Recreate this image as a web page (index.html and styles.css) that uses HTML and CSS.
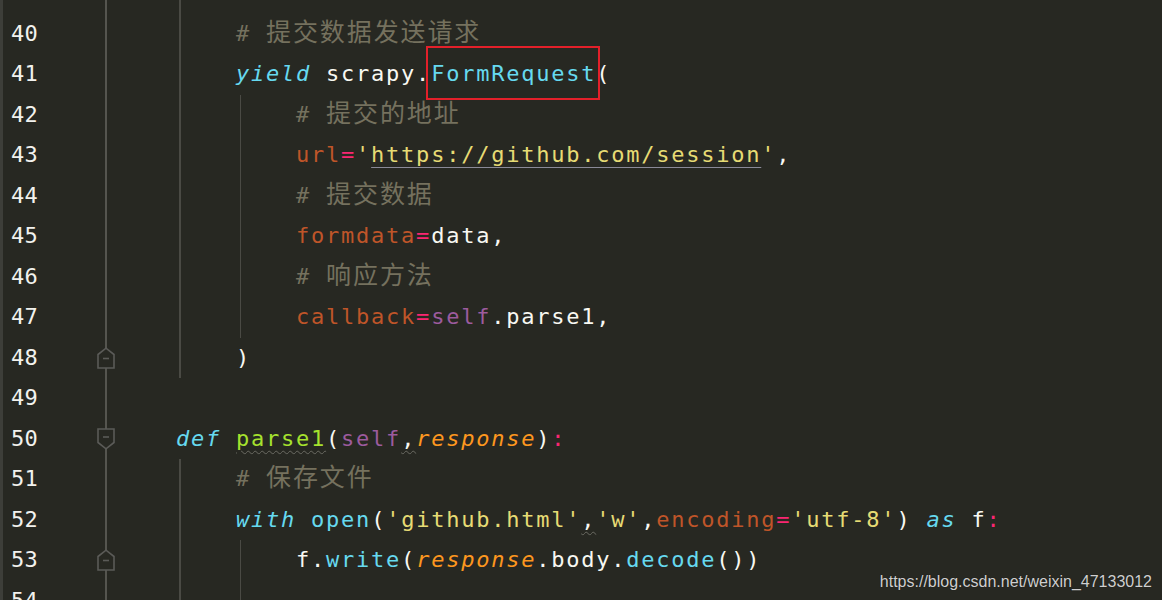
FILE: index.html
```html
<!DOCTYPE html>
<html>
<head>
<meta charset="utf-8">
<link rel="stylesheet" href="styles.css">
</head>
<body>
<div class="editor">
  <div class="row"><span class="ln">39</span><span class="fold"></span><span class="code g1"></span></div>
  <div class="row"><span class="ln">40</span><span class="fold"></span><span class="code g1">        <span class="cm"># <span class="cjk">提交数据发送请求</span></span></span></div>
  <div class="row"><span class="ln">41</span><span class="fold"></span><span class="code g1">        <span class="kw">yield</span> scrapy.<span class="fn boxed">FormRequest</span>(</span></div>
  <div class="row"><span class="ln">42</span><span class="fold"></span><span class="code g2">            <span class="cm"># <span class="cjk">提交的地址</span></span></span></div>
  <div class="row"><span class="ln">43</span><span class="fold"></span><span class="code g2">            <span class="arg">url</span><span class="op">=</span><span class="str">'<span class="link">https://github.com/session</span>'</span>,</span></div>
  <div class="row"><span class="ln">44</span><span class="fold"></span><span class="code g2">            <span class="cm"># <span class="cjk">提交数据</span></span></span></div>
  <div class="row"><span class="ln">45</span><span class="fold"></span><span class="code g2">            <span class="arg">formdata</span><span class="op">=</span>data,</span></div>
  <div class="row"><span class="ln">46</span><span class="fold"></span><span class="code g2">            <span class="cm"># <span class="cjk">响应方法</span></span></span></div>
  <div class="row"><span class="ln">47</span><span class="fold"></span><span class="code g2">            <span class="arg">callback</span><span class="op">=</span><span class="self">self</span>.parse1,</span></div>
  <div class="row"><span class="ln">48</span><span class="fold"><svg class="mk" width="18" height="22" viewBox="0 0 18 22"><path d="M1 7.5 L9 1.2 L17 7.5 V21 H1 Z" fill="#272822" stroke="#5b5b58" stroke-width="1.6"/><path d="M6 11.5 H12" stroke="#5b5b58" stroke-width="1.6"/></svg></span><span class="code g1">        )</span></div>
  <div class="row"><span class="ln">49</span><span class="fold"></span><span class="code"></span></div>
  <div class="row"><span class="ln">50</span><span class="fold"><svg class="mk" width="18" height="22" viewBox="0 0 18 22"><path d="M1 1 H17 V14.5 L9 20.8 L1 14.5 Z" fill="#272822" stroke="#5b5b58" stroke-width="1.6"/><path d="M6 9 H12" stroke="#5b5b58" stroke-width="1.6"/></svg></span><span class="code">    <span class="kw">def</span> <span class="def wavy">parse1</span>(<span class="self">self</span><span class="wavy">,</span><span class="param">response</span>)<span class="op">:</span></span></div>
  <div class="row"><span class="ln">51</span><span class="fold"></span><span class="code g1">        <span class="cm"># <span class="cjk">保存文件</span></span></span></div>
  <div class="row"><span class="ln">52</span><span class="fold"></span><span class="code g1">        <span class="kw">with</span> <span class="fn">open</span>(<span class="str">'github.html'</span><span class="wavy">,</span><span class="str">'w'</span>,<span class="arg">encoding</span><span class="op">=</span><span class="str">'utf-8'</span>) <span class="kw">as</span> f<span class="op">:</span></span></div>
  <div class="row"><span class="ln">53</span><span class="fold"><svg class="mk" width="18" height="22" viewBox="0 0 18 22"><path d="M1 7.5 L9 1.2 L17 7.5 V21 H1 Z" fill="#272822" stroke="#5b5b58" stroke-width="1.6"/><path d="M6 11.5 H12" stroke="#5b5b58" stroke-width="1.6"/></svg></span><span class="code g2">            f.<span class="fn">write</span>(<span class="param">response</span>.body.<span class="fn">decode</span>())</span></div>
  <div class="row"><span class="ln">54</span><span class="fold"></span><span class="code g2"></span></div>
</div>
<div class="watermark">https://blog.csdn.net/weixin_47133012</div>
</body>
</html>
```
FILE: styles.css
```css
html, body {
  margin: 0;
  padding: 0;
  background: #272822;
  overflow: hidden;
  height: 600px;
}
body {
  position: relative;
}
.editor {
  margin-top: -27px;
  border-left: 3px solid #3d3e39;
  min-height: 640px;
}
.row {
  display: grid;
  grid-template-columns: 93px 18px 1fr;
  column-gap: 1px;
  height: 40.5px;
  align-items: center;
}
.ln {
  padding-left: 8px;
  font-family: "DejaVu Sans Mono", monospace;
  font-size: 22px;
  letter-spacing: 0.3px;
  color: #f2f2ee;
  line-height: 40.5px;
}
.fold {
  height: 40.5px;
  display: flex;
  align-items: center;
  justify-content: center;
  background: linear-gradient(to right, transparent 8px, #55554f 8px, #55554f 10px, transparent 10px);
}
.mk {
  display: block;
}
.code {
  height: 40.5px;
  line-height: 40.5px;
  white-space: pre;
  font-family: "DejaVu Sans Mono", monospace;
  font-size: 22px;
  letter-spacing: 1.76px;
  color: #f8f8f2;
}
.g1 {
  background: linear-gradient(to right, transparent 63px, #4a4a44 63px, #4a4a44 65px, transparent 65px);
}
.g2 {
  background:
    linear-gradient(to right, transparent 63px, #4a4a44 63px, #4a4a44 65px, transparent 65px),
    linear-gradient(to right, transparent 124px, #4a4a44 124px, #4a4a44 125.5px, transparent 125.5px);
}
.cm { color: #75715e; }
.cjk {
  font-family: "Noto Sans CJK SC", sans-serif;
  font-size: 25px;
  letter-spacing: 1.9px;
  line-height: 1;
}
.kw { color: #66d9ef; font-style: italic; }
.fn { color: #66d9ef; }
.def { color: #a6e22e; }
.arg { color: #bf5529; }
.op { color: #f92672; }
.str { color: #e6db74; }
.self { color: #9c5b9e; }
.param { color: #fd971f; font-style: italic; }
.link {
  text-decoration: underline;
  text-decoration-color: #8a8a98;
  text-decoration-thickness: 1px;
  text-underline-offset: 5px;
}
.wavy {
  text-decoration: underline wavy #6a6a62;
  text-decoration-thickness: 1px;
  text-underline-offset: 4px;
}
.boxed {
  position: relative;
}
.boxed::after {
  content: "";
  position: absolute;
  left: -5px;
  right: -4px;
  top: -15px;
  bottom: -14px;
  border: 2px solid #e3202a;
}
.watermark {
  position: absolute;
  right: 10px;
  bottom: 9px;
  font-family: "Liberation Sans", Arial, sans-serif;
  font-size: 16px;
  color: #cfcfcf;
  text-shadow: 0 0 1px rgba(0,0,0,0.6);
}
```
